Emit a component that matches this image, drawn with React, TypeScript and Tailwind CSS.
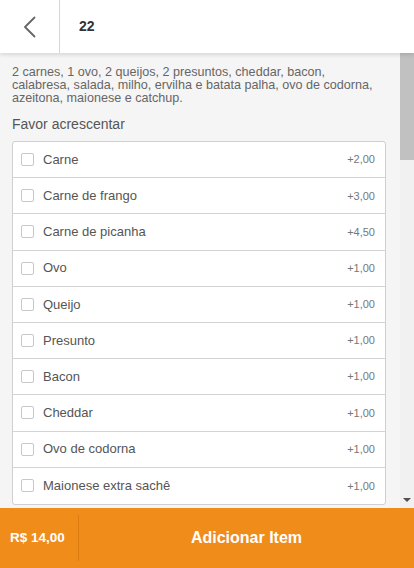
import { useState } from "react";

const addons: Array<{ name: string; price: string }> = [
  { name: "Carne", price: "+2,00" },
  { name: "Carne de frango", price: "+3,00" },
  { name: "Carne de picanha", price: "+4,50" },
  { name: "Ovo", price: "+1,00" },
  { name: "Queijo", price: "+1,00" },
  { name: "Presunto", price: "+1,00" },
  { name: "Bacon", price: "+1,00" },
  { name: "Cheddar", price: "+1,00" },
  { name: "Ovo de codorna", price: "+1,00" },
  { name: "Maionese extra sachê", price: "+1,00" },
];

function Check({ checked, onClick }: { checked: boolean; onClick: () => void }) {
  return (
    <button
      onClick={onClick}
      className={`w-[13px] h-[13px] shrink-0 rounded-[2px] border ${
        checked ? "bg-[#f08c1a] border-[#f08c1a]" : "bg-white border-[#c8c8c8]"
      }`}
    />
  );
}

export default function App() {
  const [picked, setPicked] = useState<Record<number, boolean>>({});
  const toggle = (k: number) => setPicked((p) => ({ ...p, [k]: !p[k] }));

  return (
    <div
      className="relative h-[568px] flex flex-col bg-[#f5f5f5] overflow-hidden"
      style={{ fontFamily: '"Liberation Sans", Arial, sans-serif' }}
    >
      {/* fixed top bar, sits over the scroll area */}
      <div className="absolute top-0 inset-x-0 z-10 h-[53px] bg-white flex shadow-[0_2px_4px_rgba(0,0,0,0.12)]">
        <button className="w-[60px] h-full flex items-center justify-center border-r border-[#d6d6d6]">
          <svg width="13" height="22" viewBox="0 0 13 22" fill="none">
            <polyline
              points="11.5,1.5 2,11 11.5,20.5"
              stroke="#666"
              strokeWidth="1.8"
              strokeLinecap="round"
              strokeLinejoin="round"
            />
          </svg>
        </button>
        <div className="flex items-center pl-[19px] text-[14px] font-bold text-[#333]">22</div>
      </div>

      <div className="flex-1 min-h-0 flex">
        <div className="flex-1 min-w-0 overflow-y-auto">
          <div className="pt-[66px] pl-3 pr-[14px] pb-6">
            <p className="pr-[6px] text-[12.6px] leading-[13px] text-[#666]">
              2 carnes, 1 ovo, 2 queijos, 2 presuntos, cheddar, bacon, calabresa, salada, milho,
              ervilha e batata palha, ovo de codorna, azeitona, maionese e catchup.
            </p>

            <h3 className="mt-[11px] mb-[9px] text-[14px] leading-[16px] text-[#555]">
              Favor acrescentar
            </h3>
            <div className="bg-white border border-[#cfcfcf] rounded-[3px]">
              {addons.map((a, i) => (
                <div
                  key={a.name}
                  className={`h-[36.2px] flex items-center pl-[8px] pr-[10px] ${
                    i < addons.length - 1 ? "border-b border-[#d4d4d4]" : ""
                  }`}
                >
                  <Check checked={!!picked[i]} onClick={() => toggle(i)} />
                  <span className="ml-[9px] flex-1 text-[13px] text-[#555]">{a.name}</span>
                  <span className="text-[11px] text-[#777]">{a.price}</span>
                </div>
              ))}
            </div>
          </div>
        </div>

        {/* scrollbar */}
        <div className="w-[14px] shrink-0 bg-[#f1f1f1] flex flex-col">
          <div className="h-[160px] bg-[#c1c1c1]" />
          <div className="flex-1" />
          <div className="h-[17px] flex items-center justify-center">
            <div className="w-0 h-0 border-l-[4px] border-r-[4px] border-t-[4px] border-l-transparent border-r-transparent border-t-[#505050]" />
          </div>
        </div>
      </div>

      <div className="h-[60px] shrink-0 flex items-center bg-[#f08c1a] text-white font-bold">
        <div className="w-[79px] h-[46px] flex items-center pl-[10px] text-[13.5px] border-r border-[#dc7c10]">
          R$ 14,00
        </div>
        <button className="flex-1 h-full text-[16px]">Adicionar Item</button>
      </div>
    </div>
  );
}
